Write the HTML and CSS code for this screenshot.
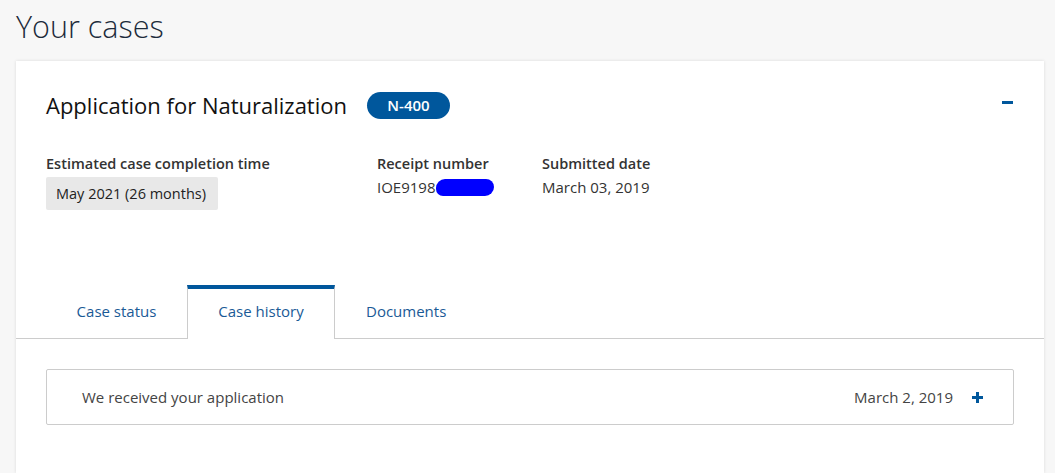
FILE: index.html
```html
<!DOCTYPE html>
<html lang="en">
<head>
<meta charset="utf-8">
<title>Your cases</title>
<link rel="stylesheet" href="styles.css">
</head>
<body>
<h1 class="page-title">Your cases</h1>
<section class="card">
  <div class="card-head">
    <div class="card-title-wrap">
      <h2 class="card-title">Application for Naturalization</h2>
      <span class="badge">N-400</span>
    </div>
    <button class="collapse" aria-label="Collapse"><span class="minus"></span></button>
  </div>
  <div class="facts">
    <div class="fact fact-est">
      <div class="fact-label">Estimated case completion time</div>
      <div class="fact-pill">May 2021 (26 months)</div>
    </div>
    <div class="fact fact-receipt">
      <div class="fact-label">Receipt number</div>
      <div class="fact-value">IOE9198<span class="redact"></span></div>
    </div>
    <div class="fact">
      <div class="fact-label">Submitted date</div>
      <div class="fact-value">March 03, 2019</div>
    </div>
  </div>
  <nav class="tabs">
    <a class="tab tab-first">Case status</a>
    <a class="tab tab-active">Case history</a>
    <a class="tab">Documents</a>
  </nav>
  <div class="history">
    <div class="event">
      <span class="event-text">We received your application</span>
      <span class="event-right">
        <span class="event-date">March 2, 2019</span>
        <span class="plus"></span>
      </span>
    </div>
  </div>
</section>
</body>
</html>
```
FILE: styles.css
```css
* { box-sizing: border-box; }
html, body { margin: 0; padding: 0; }
body {
  background: #f7f7f7;
  font-family: "Open Sans", Lato, Arial, sans-serif;
  color: #333;
  height: 473px;
  overflow: hidden;
}
.page-title {
  margin: 0;
  padding: 6px 0 0 16px;
  height: 61px;
  font-size: 30.5px;
  font-weight: 300;
  color: #1c2b3b;
  line-height: 40px;
}
.card {
  margin: 0 11px 0 16px;
  background: #fff;
  box-shadow: 0 0 3px rgba(0,0,0,0.12);
  height: 412px;
}
.card-head {
  display: flex;
  align-items: center;
  justify-content: space-between;
  padding: 28px 30px 0 30px;
  height: 60px;
}
.card-title-wrap { display: flex; align-items: center; gap: 20px; }
.card-title {
  margin: 0;
  font-size: 22px;
  font-weight: 400;
  color: #111;
  line-height: 32px;
}
.badge {
  display: inline-block;
  background: #00579c;
  color: #fff;
  font-size: 15px;
  font-weight: 600;
  border-radius: 14px;
  width: 83px;
  text-align: center;
  line-height: 27px;
  height: 27px;
}
.collapse {
  border: 0; background: none; padding: 0; width: 12px; height: 12px;
  display: flex; align-items: center; justify-content: center; margin-top: -6px; margin-right: 1px;
}
.minus { display: block; width: 11px; height: 3px; background: #00579c; }
.facts {
  display: flex;
  padding: 34px 30px 0 30px;
  height: 164px;
}
.fact-label { font-size: 14.5px; font-weight: 600; color: #333; line-height: 18px; }
.fact-est { width: 331px; }
.fact-receipt { width: 165px; }
.fact-pill {
  display: inline-block;
  margin-top: 4px;
  background: #e8e8e8;
  border-radius: 2px;
  padding: 0 12px 0 10px;
  height: 33px;
  line-height: 33px;
  font-size: 14.5px;
  color: #222;
}
.fact-value { margin-top: 5px; font-size: 15px; color: #333; line-height: 18px; display: flex; align-items: center; }
.redact {
  display: inline-block;
  width: 58px;
  height: 17px;
  background: #0000ff;
  border-radius: 9px 8px 9px 7px;
  margin-left: 0;
}
.tabs {
  display: flex;
  padding: 0 30px;
  border-bottom: 1px solid #ccc;
  height: 54px;
  align-items: stretch;
}
.tab {
  display: flex;
  align-items: center;
  justify-content: center;
  padding: 0 30px 3px;
  font-size: 15px;
  color: #1a5a96;
  border: 1px solid transparent;
  border-bottom: 0;
}
.tab-first { width: 141px; padding: 0 0 3px; }
.tab-active {
  width: 148px;
  border-color: #ccc;
  border-top: 4px solid #00579c;
  background: #fff;
  margin-bottom: -1px;
  padding: 0 0 7px;
}
.history { padding: 30px 30px 0 30px; }
.event {
  display: flex;
  justify-content: space-between;
  align-items: center;
  border: 1px solid #ccc;
  border-radius: 2px;
  height: 56px;
  padding: 0 30px 0 35px;
  font-size: 15px;
  color: #444;
}
.event-right { display: flex; align-items: center; gap: 19px; }
.plus {
  position: relative;
  width: 11px; height: 11px; display: inline-block;
}
.plus::before, .plus::after {
  content: ""; position: absolute; background: #00579c;
}
.plus::before { left: 0; top: 4px; width: 11px; height: 3px; }
.plus::after { left: 4px; top: 0; width: 3px; height: 11px; }
```
